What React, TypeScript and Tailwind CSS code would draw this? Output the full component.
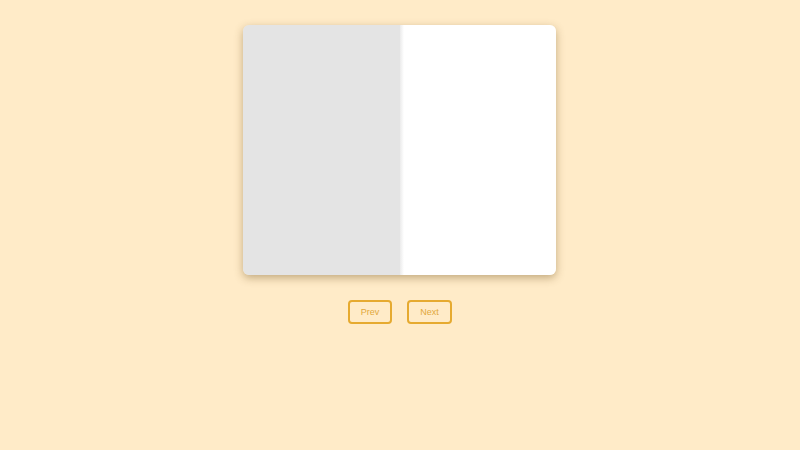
export default function App() {
  return (
    <div className="min-h-screen w-full bg-[#ffebc8] flex flex-col items-center pt-[25px] font-['Liberation_Sans',Arial,sans-serif]">
      <div className="flex w-[313px] h-[250px] mr-[1px] rounded-[6px] shadow-[0_3px_8px_rgba(120,90,40,0.45)]">
        <div className="w-[157px] h-full bg-[#e4e4e4] rounded-l-[6px]" />
        <div className="w-[156px] h-full bg-white rounded-r-[6px] bg-[linear-gradient(to_right,#ebebeb_0px,#ffffff_4px)]" />
      </div>
      <div className="flex gap-[15px] mt-[25px]">
        <button className="w-[44px] h-[24px] pt-[1px] border-2 border-[#e6aa30] rounded-[4px] text-[9px] text-[#e2a83a] bg-transparent">
          Prev
        </button>
        <button className="w-[45px] h-[24px] pt-[1px] border-2 border-[#e6aa30] rounded-[4px] text-[9px] text-[#e2a83a] bg-transparent">
          Next
        </button>
      </div>
    </div>
  )
}
